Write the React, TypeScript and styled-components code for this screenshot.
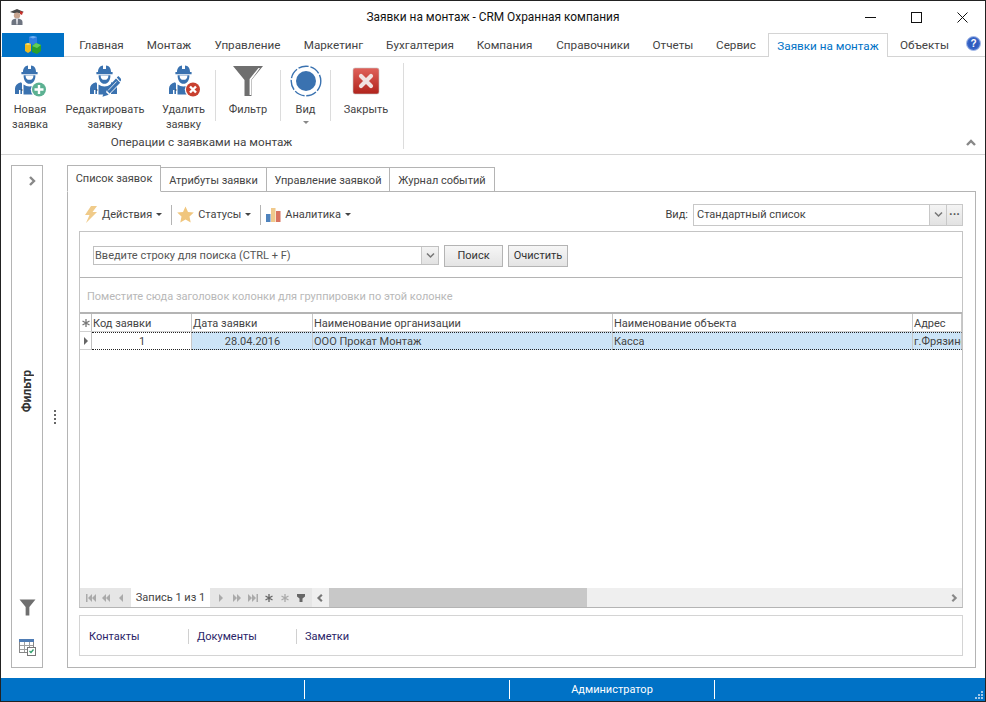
import React from "react";
import styled, { createGlobalStyle } from "styled-components";

const Global = createGlobalStyle`
  html, body { margin: 0; padding: 0; background: #fff; }
  * { box-sizing: border-box; }
`;

const Window = styled.div`
  width: 986px;
  height: 702px;
  border: 1px solid #222;
  display: flex;
  flex-direction: column;
  overflow: hidden;
  background: #fff;
  font-family: Roboto, "Open Sans", sans-serif;
  font-size: 11px;
  color: #3c3c3c;
`;

const TitleBar = styled.div`
  height: 32px;
  flex-shrink: 0;
  display: flex;
  align-items: center;
  padding-left: 8px;
`;

const TitleText = styled.div`
  flex: 1;
  text-align: center;
  font-size: 11.9px;
  color: #111;
  padding-left: 114px;
`;

const WinButtons = styled.div`
  display: flex;
  align-items: center;
`;

const WinButton = styled.div`
  width: 46px;
  height: 30px;
  display: flex;
  align-items: center;
  justify-content: center;
`;

const TabRow = styled.div`
  height: 24px;
  flex-shrink: 0;
  display: flex;
  align-items: stretch;
  border-bottom: 1px solid #d4d4d4;
  padding-left: 1px;
`;

const FileButton = styled.div`
  width: 62px;
  height: 24px;
  background: #0072c6;
  display: flex;
  align-items: center;
  justify-content: center;
  margin-right: 4px;
`;

const TopTab = styled.div<{ $active?: boolean; $w: number }>`
  width: ${(p) => p.$w}px;
  flex-shrink: 0;
  height: ${(p) => (p.$active ? "24px" : "23px")};
  display: flex;
  align-items: center;
  justify-content: center;
  white-space: nowrap;
  font-size: 11.7px;
  color: ${(p) => (p.$active ? "#0072c6" : "#444")};
  background: #fff;
  ${(p) => p.$active && "border: 1px solid #d4d4d4; border-bottom: none;"}
`;

const HelpIcon = styled.div`
  margin-left: auto;
  padding: 0 4px 3px 0;
  display: flex;
  align-items: center;
`;

const Ribbon = styled.div`
  height: 98px;
  flex-shrink: 0;
  border-bottom: 1px solid #d4d4d4;
  display: flex;
  padding-left: 1px;
  position: relative;
`;

const RibbonGroup = styled.div`
  width: 402px;
  margin-top: 6px;
  height: 86px;
  border-right: 1px solid #dcdcdc;
  display: flex;
  flex-direction: column;
`;

const RibbonButtons = styled.div`
  display: flex;
  height: 73px;
  flex-shrink: 0;
  padding-top: 2px;
`;

const RibbonButton = styled.div<{ $w: number }>`
  width: ${(p) => p.$w}px;
  flex-shrink: 0;
  display: flex;
  flex-direction: column;
  align-items: center;
  text-align: center;
  line-height: 15px;
  color: #444;
  svg { flex-shrink: 0; margin-bottom: 5px; }
`;

const RibbonSep = styled.div`
  width: 1px;
  height: 51px;
  margin-top: 5px;
  background: #dcdcdc;
  flex-shrink: 0;
`;

const Caret = styled.div`
  width: 0;
  height: 0;
  margin-top: 4px;
  border-left: 3px solid transparent;
  border-right: 3px solid transparent;
  border-top: 3px solid #888;
`;

const GroupLabel = styled.div`
  text-align: center;
  line-height: 13px;
  font-size: 11.7px;
  padding-right: 2px;
  color: #444;
`;

const Collapse = styled.div`
  position: absolute;
  right: 8px;
  bottom: 5px;
  line-height: 0;
`;

const Main = styled.div`
  flex: 1;
  min-height: 0;
  display: flex;
  padding: 10px 9px 10px 10px;
`;

const SidePanel = styled.div`
  width: 32px;
  flex-shrink: 0;
  border: 1px solid #b4b4b4;
  display: flex;
  flex-direction: column;
  align-items: center;
`;

const SideChevron = styled.div`
  height: 30px;
  padding: 9px 0 0 9px;
  line-height: 0;
`;

const SideTitle = styled.div`
  flex: 1;
  display: flex;
  align-items: center;
  justify-content: center;
`;

const VerticalText = styled.span`
  writing-mode: vertical-rl;
  transform: rotate(180deg);
  font-weight: 700;
  font-size: 12px;
  color: #333;
`;

const SideIcons = styled.div`
  height: 80px;
  display: flex;
  flex-direction: column;
  align-items: center;
  gap: 23px;
  padding-top: 12px;
`;

const Splitter = styled.div`
  width: 24px;
  flex-shrink: 0;
  display: flex;
  flex-direction: column;
  align-items: center;
  justify-content: center;
  gap: 2px;
`;

const SplitDot = styled.div`
  width: 2px;
  height: 2px;
  background: #666;
`;

const Content = styled.div`
  flex: 1;
  min-width: 0;
  display: flex;
  flex-direction: column;
`;

const PageTabs = styled.div`
  height: 27px;
  flex-shrink: 0;
  display: flex;
  align-items: flex-end;
  margin-bottom: -1px;
  position: relative;
  z-index: 1;
`;

const PageTab = styled.div<{ $active?: boolean; $w: number }>`
  width: ${(p) => p.$w}px;
  height: ${(p) => (p.$active ? "27px" : "25px")};
  border: 1px solid #b4b4b4;
  border-bottom: ${(p) => (p.$active ? "1px solid #fff" : "1px solid #b4b4b4")};
  ${(p) => !p.$active && "border-left: none;"}
  display: flex;
  align-items: center;
  justify-content: center;
  background: #fff;
  color: #444;
  white-space: nowrap;
  ${(p) => !p.$active && "padding-top: 2px;"}
  ${(p) => p.$active && "padding-bottom: 1px;"}
`;

const TabBody = styled.div`
  flex: 1;
  min-height: 0;
  border: 1px solid #b4b4b4;
  padding: 0 12px 11px 11px;
  display: flex;
  flex-direction: column;
`;

const Toolbar = styled.div`
  height: 39px;
  flex-shrink: 0;
  display: flex;
  align-items: center;
  padding: 6px 0 0 5px;
`;

const ToolItem = styled.div`
  display: flex;
  align-items: center;
  gap: 4px;
  color: #444;
`;

const ToolCaret = styled.div`
  width: 0;
  height: 0;
  border-left: 3px solid transparent;
  border-right: 3px solid transparent;
  border-top: 3px solid #444;
`;

const ToolSep = styled.div`
  width: 1px;
  height: 20px;
  background: #b4b4b4;
  margin: 0 5px 0 9px;
`;

const ViewPicker = styled.div`
  margin-left: auto;
  display: flex;
  align-items: center;
  gap: 5px;
`;

const Combo = styled.div`
  width: 270px;
  height: 22px;
  border: 1px solid #c8c8c8;
  display: flex;
  align-items: stretch;
`;

const ComboText = styled.div`
  flex: 1;
  padding-left: 3px;
  display: flex;
  align-items: center;
  color: #444;
`;

const ComboButton = styled.div<{ $w?: number }>`
  width: ${(p) => p.$w ?? 17}px;
  flex-shrink: 0;
  border-left: 1px solid #c8c8c8;
  background: linear-gradient(#f4f4f4, #e2e2e2);
  display: flex;
  align-items: center;
  justify-content: center;
  color: #555;
  font-size: 12px;
  font-weight: 700;
  line-height: 1;
`;

const GridFrame = styled.div`
  flex: 1;
  min-height: 0;
  border: 1px solid #c4c4c4;
  border-bottom-color: #b4b4b4;
  display: flex;
  flex-direction: column;
  overflow: hidden;
`;

const SearchRow = styled.div`
  height: 46px;
  flex-shrink: 0;
  border-bottom: 1px solid #b4b4b4;
  display: flex;
  align-items: center;
  padding: 2px 0 0 13px;
  gap: 5px;
`;

const SearchBox = styled.div`
  width: 346px;
  height: 19px;
  border: 1px solid #c0c0c0;
  display: flex;
  align-items: stretch;
`;

const SearchText = styled.div`
  flex: 1;
  padding-left: 1px;
  display: flex;
  align-items: center;
  color: #555;
`;

const PushButton = styled.div<{ $w: number }>`
  width: ${(p) => p.$w}px;
  height: 22px;
  border: 1px solid #b4b4b4;
  background: linear-gradient(#f6f6f6, #e4e4e4);
  display: flex;
  align-items: center;
  justify-content: center;
  color: #333;
`;

const GroupPanel = styled.div`
  height: 36px;
  flex-shrink: 0;
  display: flex;
  align-items: center;
  padding: 2px 0 0 7px;
  color: #b8b8b8;
  border-bottom: 2px solid #b4b4b4;
`;

const HeaderRow = styled.div`
  height: 18px;
  flex-shrink: 0;
  display: flex;
  border-bottom: 1px solid #d0d0d0;
`;

const DataRow = styled.div`
  height: 18px;
  flex-shrink: 0;
  display: flex;
`;

const Cell = styled.div<{ $w?: number; $selected?: boolean; $center?: boolean; $marker?: boolean; $focused?: boolean; $head?: boolean }>`
  ${(p) => (p.$w ? `width: ${p.$w}px; flex-shrink: 0;` : "flex: 1; min-width: 0;")}
  border-right: 1px solid ${(p) => (p.$marker ? "#c0c0c0" : "#c8c8c8")};
  padding-left: 1px;
  ${(p) => p.$head && "padding-top: 2px;"}
  display: flex;
  align-items: center;
  overflow: hidden;
  white-space: nowrap;
  color: #444;
  background: ${(p) => (p.$selected ? "#cce4f7" : "#fff")};
  ${(p) => p.$center && "justify-content: center;"}
  ${(p) => p.$marker && "justify-content: center; padding-left: 0;"}
  ${(p) => p.$focused && "border-top: 1px dotted #222; border-bottom: 1px dotted #222;"}
  ${(p) => p.$marker && p.$focused && "border-top: none; border-bottom: 1px solid #d0d0d0;"}
`;

const GridEmpty = styled.div`
  flex: 1;
`;

const NavBar = styled.div`
  height: 19px;
  flex-shrink: 0;
  display: flex;
  align-items: stretch;
  background: #efefef;
`;

const NavGroup = styled.div<{ $w: number }>`
  width: ${(p) => p.$w}px;
  flex-shrink: 0;
  background: #e6e6e6;
  display: flex;
  align-items: center;
  justify-content: space-around;
  padding: 0 3px;
`;

const NavLabel = styled.div`
  width: 79px;
  flex-shrink: 0;
  background: #fff;
  display: flex;
  align-items: center;
  justify-content: center;
  color: #444;
  white-space: nowrap;
`;

const ScrollArrow = styled.div`
  width: 17px;
  flex-shrink: 0;
  display: flex;
  align-items: center;
  justify-content: center;
`;

const ScrollThumb = styled.div`
  width: 258px;
  flex-shrink: 0;
  background: #c8c8c8;
`;

const ScrollTrack = styled.div`
  flex: 1;
`;

const BottomTabs = styled.div`
  height: 41px;
  flex-shrink: 0;
  margin-top: 7px;
  border: 1px solid #d4d4d4;
  display: flex;
  align-items: center;
  padding: 1px 0 0 9px;
`;

const BottomTab = styled.div<{ $w: number; $last?: boolean; $inset?: boolean }>`
  width: ${(p) => p.$w}px;
  height: 15px;
  display: flex;
  align-items: center;
  color: #2a2468;
  ${(p) => p.$inset && "padding-left: 8px;"}
  ${(p) => !p.$last && "border-right: 1px solid #d0d0d0;"}
`;

const StatusBar = styled.div`
  height: 23px;
  flex-shrink: 0;
  background: #0072c6;
  display: flex;
  align-items: stretch;
  padding: 2px 0;
  color: #fff;
  position: relative;
`;

const StatusCell = styled.div<{ $w: number }>`
  width: ${(p) => p.$w}px;
  flex-shrink: 0;
  border-right: 1px solid #fff;
  display: flex;
  align-items: center;
  justify-content: center;
`;

const Grip = styled.div`
  position: absolute;
  right: 1px;
  bottom: 1px;
  line-height: 0;
`;

const BLUE = "#3a72b0";

const Worker = ({ children }: { children?: React.ReactNode }) => (
  <svg width="32" height="32" viewBox="0 0 32 32">
    <path d="M9 7C9 2.5 11.5 .8 14 .4V4h3V.4C20 .8 22 2.5 22 7h1.600v2.200H7.400V7z" fill={BLUE} />
    <path d="M9.600 10.200h11.800c.2 5-2.600 8.600-5.900 8.600s-6-3.600-5.900-8.600z" fill={BLUE} />
    <path d="M11.600 10.400h7.800c0 3-1.300 4.400-3.900 4.400s-3.900-1.400-3.900-4.400z" fill="#fff" />
    <path d="M1 29v-5.500c0-3 2-5.300 6-6.300l1 1.200v10.600H6.400V25H5v4z" fill={BLUE} />
    <path d="M9.500 19.500c2 1.300 3.500 2 6 2s4-.7 6-2v5l-3 5h-9z" fill={BLUE} />
    <path d="M7.500 25h1" stroke="#111" strokeWidth="1" />
    <path d="M22 17.200c3 .8 5 2 6 4.300V29h-6z" fill={BLUE} />
    {children}
  </svg>
);

const AddBadge = () => (
  <g>
    <circle cx="25" cy="24.500" r="8.200" fill="#fff" />
    <circle cx="25" cy="24.500" r="7" fill="#5cb192" />
    <path d="M25 20v9M20.500 24.500h9" stroke="#fff" strokeWidth="2.400" />
  </g>
);

const EditBadge = () => (
  <g>
    <path d="M16 31l2-7L29 13l4 4-11 11z" fill="#fff" />
    <path d="M13.500 31.800l1.800-6.200 4.400 4.200z" fill={BLUE} />
    <path d="M16.500 24.500L27 13.500l4.200 4.200-10.600 10.800z" fill={BLUE} />
    <path d="M19 25.500l8.600-9" stroke="#fff" strokeWidth=".8" />
    <path d="M27.800 12.600l1.600-1.600 3.400 3.600-1.600 1.800z" fill={BLUE} />
  </g>
);

const DeleteBadge = () => (
  <g>
    <circle cx="25" cy="24.500" r="8.200" fill="#fff" />
    <circle cx="25" cy="24.500" r="7" fill="#c8402f" />
    <path d="M22 21.500l6 6M28 21.500l-6 6" stroke="#fff" strokeWidth="2.400" />
  </g>
);

const Funnel = ({ size = 32, hi = true }: { size?: number; hi?: boolean }) => (
  <svg width={size} height={size} viewBox="0 0 32 32">
    <path d="M1 1h30L19.500 15v16h-7V15z" fill="#6f6f6f" />
    {hi && <path d="M26.500 3L17.600 14v16h1.600V15L28 3z" fill="#fff" />}
  </svg>
);

const ViewRing = () => (
  <svg width="32" height="32" viewBox="0 0 32 32">
    <circle cx="16" cy="16" r="14.800" fill="none" stroke={BLUE} strokeWidth="1.400" strokeDasharray="10.500 1.800" />
    <circle cx="16" cy="16" r="10" fill={BLUE} />
  </svg>
);

const CloseTile = () => (
  <svg width="32" height="32" viewBox="0 0 32 32">
    <defs>
      <linearGradient id="closeRed" x1="0" y1="0" x2="0" y2="1">
        <stop offset="0" stopColor="#e0615a" />
        <stop offset="1" stopColor="#b0231c" />
      </linearGradient>
    </defs>
    <rect x="3" y="3" width="26" height="26" rx="2" fill="url(#closeRed)" stroke="#c2c2c2" strokeWidth=".6" />
    <path d="M11 11l10 10M21 11L11 21" stroke="#f1e3e2" strokeWidth="4.200" strokeLinecap="round" />
  </svg>
);

const Cubes = () => (
  <svg width="20" height="20" viewBox="0 0 20 20">
    <path d="M6 2l4-1 4 1v6l-4 2-4-2z" fill="#2f7fe0" />
    <path d="M6 2l4 1.500L14 2l-4-1z" fill="#6fb0f0" />
    <path d="M2 9l3-1 3 1v7l-3 2-3-2z" fill="#eebc1f" />
    <path d="M2 9l3 1.200L8 9 5 8z" fill="#f7dc70" />
    <path d="M9 11l4-3 5 2v6l-4 3-5-2z" fill="#2ba02b" />
    <path d="M9 11l5 2 4-3-5-2z" fill="#63cc5a" />
  </svg>
);

const AppIcon = () => (
  <svg width="16" height="18" viewBox="0 0 16 18">
    <path d="M1 4l7-3 7 3-7 2z" fill="#4a4a4a" />
    <path d="M11 3l3 1-1 3-2-1z" fill="#c6302a" />
    <ellipse cx="8" cy="7.500" rx="3.200" ry="3" fill="#c8a590" />
    <path d="M2.500 17v-3c0-2 2-3.500 5.500-3.500s5.500 1.500 5.500 3.500v3z" fill="#6e7480" />
    <path d="M7 10.500h2l-.4 6h-1.200z" fill="#e8e8ec" />
  </svg>
);

const Help = () => (
  <svg width="15" height="15" viewBox="0 0 15 15">
    <circle cx="7.500" cy="7.500" r="7" fill="#3c68c8" stroke="#a9bde8" />
    <circle cx="7.500" cy="7.500" r="5" fill="#2f5cc0" />
    <text x="7.500" y="11" textAnchor="middle" fontSize="10" fontWeight="700" fill="#fff" fontFamily="Liberation Sans, sans-serif">?</text>
  </svg>
);

const Chevron = ({ dir, size = 11, color = "#777", w = 2 }: { dir: "left" | "right" | "up"; size?: number; color?: string; w?: number }) => {
  const d = dir === "left" ? "M7 2L3 6l4 4" : dir === "right" ? "M4 2l4 4-4 4" : "M2 8l4-4 4 4";
  return (
    <svg width={size} height={size} viewBox="0 0 12 12">
      <path d={d} fill="none" stroke={color} strokeWidth={w} />
    </svg>
  );
};

const DownChevron = () => (
  <svg width="9" height="7" viewBox="0 0 9 7">
    <path d="M1 1.500l3.500 3.500L8 1.500" fill="none" stroke="#777" strokeWidth="1.500" />
  </svg>
);

const Bolt = () => (
  <svg width="14" height="17" viewBox="0 0 14 17">
    <path d="M7 0h6L8.500 6H13L2 17l3.500-8H1z" fill="#f0cb8a" />
  </svg>
);

const Star = () => (
  <svg width="17" height="17" viewBox="0 0 17 17">
    <path d="M8.500.5l2.500 5.500 5.800.6-4.300 4 1.200 6-5.200-3-5.200 3 1.200-6-4.300-4 5.800-.6z" fill="#f0c67e" />
  </svg>
);

const Bars = () => (
  <svg width="15" height="15" viewBox="0 0 15 15">
    <rect x="0" y="7" width="4.500" height="8" fill="#4f83bd" />
    <rect x="5" y="1" width="4.500" height="14" fill="#f0c98c" />
    <rect x="10" y="4" width="4.500" height="11" fill="#d9735f" />
  </svg>
);

const TableCheck = () => (
  <svg width="17" height="17" viewBox="0 0 17 17">
    <rect x=".5" y=".5" width="14" height="13" fill="#fff" stroke="#888" />
    <rect x="0" y="0" width="15" height="3" fill="#4f7cb4" />
    <path d="M5.500 3v10M10.500 3v10M1 6.500h13M1 10.500h13" stroke="#a0a0a0" />
    <rect x="8.500" y="8.500" width="8" height="8" fill="#fff" stroke="#777" />
    <path d="M10.500 12l1.500 1.500 2.500-3" fill="none" stroke="#2e9e6b" strokeWidth="1.300" />
  </svg>
);

const Nav = ({ kind, color = "#aaa" }: { kind: string; color?: string }) => {
  const tri = (x: number, left: boolean) =>
    left ? `M${x + 4} 1v8L${x} 5z` : `M${x} 1v8l4-4z`;
  let el: React.ReactNode = null;
  if (kind === "first") el = <><rect x="0" y="1" width="1.500" height="8" fill={color} /><path d={tri(2, true)} fill={color} /><path d={tri(6, true)} fill={color} /></>;
  if (kind === "pp") el = <><path d={tri(1, true)} fill={color} /><path d={tri(5, true)} fill={color} /></>;
  if (kind === "p") el = <path d={tri(3, true)} fill={color} />;
  if (kind === "n") el = <path d={tri(3, false)} fill={color} />;
  if (kind === "nn") el = <><path d={tri(1, false)} fill={color} /><path d={tri(5, false)} fill={color} /></>;
  if (kind === "last") el = <><path d={tri(0, false)} fill={color} /><path d={tri(4, false)} fill={color} /><rect x="8.500" y="1" width="1.500" height="8" fill={color} /></>;
  if (kind === "star") el = <path d="M5 1v8M1.500 3l7 4M8.500 3l-7 4" stroke={color} strokeWidth="1.300" />;
  if (kind === "filter") el = <path d="M1 1h8v2.500L6.500 5.500V9h-3V5.500L1 3.500z" fill={color} />;
  return <svg width="10" height="10" viewBox="0 0 10 10">{el}</svg>;
};

const Grid3 = () => (
  <svg width="9" height="9" viewBox="0 0 9 9">
    <path d="M6 0h2v2H6zM3 3h2v2H3zM6 3h2v2H6zM0 6h2v2H0zM3 6h2v2H3zM6 6h2v2H6z" fill="#9fc7e8" />
  </svg>
);

const topTabs: [string, number][] = [
  ["Главная", 67],
  ["Монтаж", 68],
  ["Управление", 89],
  ["Маркетинг", 83],
  ["Бухгалтерия", 90],
  ["Компания", 79],
  ["Справочники", 98],
  ["Отчеты", 62],
  ["Сервис", 64],
];

export default function App() {
  return (
    <Window>
      <Global />
      <TitleBar>
        <AppIcon />
        <TitleText>Заявки на монтаж - CRM Охранная компания</TitleText>
        <WinButtons>
          <WinButton>
            <svg width="11" height="11" viewBox="0 0 11 11"><path d="M0 5.500h11" stroke="#111" /></svg>
          </WinButton>
          <WinButton>
            <svg width="11" height="11" viewBox="0 0 11 11"><rect x=".5" y=".5" width="10" height="10" fill="none" stroke="#111" /></svg>
          </WinButton>
          <WinButton>
            <svg width="11" height="11" viewBox="0 0 11 11"><path d="M.5.500l10 10M10.500.500l-10 10" stroke="#111" /></svg>
          </WinButton>
        </WinButtons>
      </TitleBar>

      <TabRow>
        <FileButton><Cubes /></FileButton>
        {topTabs.map(([t, w]) => <TopTab key={t} $w={w}>{t}</TopTab>)}
        <TopTab $active $w={120}>Заявки на монтаж</TopTab>
        <TopTab $w={73}>Объекты</TopTab>
        <HelpIcon><Help /></HelpIcon>
      </TabRow>

      <Ribbon>
        <RibbonGroup>
          <RibbonButtons>
            <RibbonButton $w={56}><Worker><AddBadge /></Worker>Новая<br />заявка</RibbonButton>
            <RibbonButton $w={94}><Worker><EditBadge /></Worker>Редактировать<br />заявку</RibbonButton>
            <RibbonButton $w={63}><Worker><DeleteBadge /></Worker>Удалить<br />заявку</RibbonButton>
            <RibbonSep />
            <RibbonButton $w={64}><Funnel />Фильтр</RibbonButton>
            <RibbonSep />
            <RibbonButton $w={49}><ViewRing />Вид<Caret /></RibbonButton>
            <RibbonSep />
            <RibbonButton $w={70}><CloseTile />Закрыть</RibbonButton>
          </RibbonButtons>
          <GroupLabel>Операции с заявками на монтаж</GroupLabel>
        </RibbonGroup>
        <Collapse><Chevron dir="up" size={12} color="#888" w={2.4} /></Collapse>
      </Ribbon>

      <Main>
        <SidePanel>
          <SideChevron><Chevron dir="right" size={12} color="#888" w={2.4} /></SideChevron>
          <SideTitle><VerticalText>Фильтр</VerticalText></SideTitle>
          <SideIcons>
            <Funnel size={17} hi={false} />
            <TableCheck />
          </SideIcons>
        </SidePanel>
        <Splitter>
          <SplitDot /><SplitDot /><SplitDot /><SplitDot />
        </Splitter>
        <Content>
          <PageTabs>
            <PageTab $active $w={94}>Список заявок</PageTab>
            <PageTab $w={106}>Атрибуты заявки</PageTab>
            <PageTab $w={123}>Управление заявкой</PageTab>
            <PageTab $w={105}>Журнал событий</PageTab>
          </PageTabs>
          <TabBody>
            <Toolbar>
              <ToolItem><Bolt />Действия<ToolCaret /></ToolItem>
              <ToolSep />
              <ToolItem><Star />Статусы<ToolCaret /></ToolItem>
              <ToolSep />
              <ToolItem><Bars />Аналитика<ToolCaret /></ToolItem>
              <ViewPicker>
                Вид:
                <Combo>
                  <ComboText>Стандартный список</ComboText>
                  <ComboButton><DownChevron /></ComboButton>
                  <ComboButton $w={16}>···</ComboButton>
                </Combo>
              </ViewPicker>
            </Toolbar>
            <GridFrame>
              <SearchRow>
                <SearchBox>
                  <SearchText>Введите строку для поиска (CTRL + F)</SearchText>
                  <ComboButton><DownChevron /></ComboButton>
                </SearchBox>
                <PushButton $w={59}>Поиск</PushButton>
                <PushButton $w={60}>Очистить</PushButton>
              </SearchRow>
              <GroupPanel>Поместите сюда заголовок колонки для группировки по этой колонке</GroupPanel>
              <HeaderRow>
                <Cell $w={12} $marker><Nav kind="star" color="#777" /></Cell>
                <Cell $w={100} $head>Код заявки</Cell>
                <Cell $w={121} $head>Дата заявки</Cell>
                <Cell $w={300} $head>Наименование организации</Cell>
                <Cell $w={300} $head>Наименование объекта</Cell>
                <Cell $head>Адрес</Cell>
              </HeaderRow>
              <DataRow>
                <Cell $w={12} $marker $focused><Nav kind="n" color="#666" /></Cell>
                <Cell $w={100} $center $focused>1</Cell>
                <Cell $w={121} $center $selected $focused>28.04.2016</Cell>
                <Cell $w={300} $selected $focused>ООО Прокат Монтаж</Cell>
                <Cell $w={300} $selected $focused>Касса</Cell>
                <Cell $selected $focused>г.Фрязино</Cell>
              </DataRow>
              <GridEmpty />
              <NavBar>
                <NavGroup $w={51}>
                  <Nav kind="first" /><Nav kind="pp" /><Nav kind="p" />
                </NavGroup>
                <NavLabel>Запись 1 из 1</NavLabel>
                <NavGroup $w={102}>
                  <Nav kind="n" /><Nav kind="nn" /><Nav kind="last" />
                  <Nav kind="star" color="#666" /><Nav kind="star" color="#aaa" /><Nav kind="filter" color="#666" />
                </NavGroup>
                <ScrollArrow><Chevron dir="left" size={10} color="#777" w={2.6} /></ScrollArrow>
                <ScrollThumb />
                <ScrollTrack />
                <ScrollArrow><Chevron dir="right" size={10} color="#888" w={2.6} /></ScrollArrow>
              </NavBar>
            </GridFrame>
            <BottomTabs>
              <BottomTab $w={100}>Контакты</BottomTab>
              <BottomTab $w={108} $inset>Документы</BottomTab>
              <BottomTab $w={100} $last $inset>Заметки</BottomTab>
            </BottomTabs>
          </TabBody>
        </Content>
      </Main>

      <StatusBar>
        <StatusCell $w={304} />
        <StatusCell $w={205} />
        <StatusCell $w={205}>Администратор</StatusCell>
        <Grip><Grid3 /></Grip>
      </StatusBar>
    </Window>
  );
}
